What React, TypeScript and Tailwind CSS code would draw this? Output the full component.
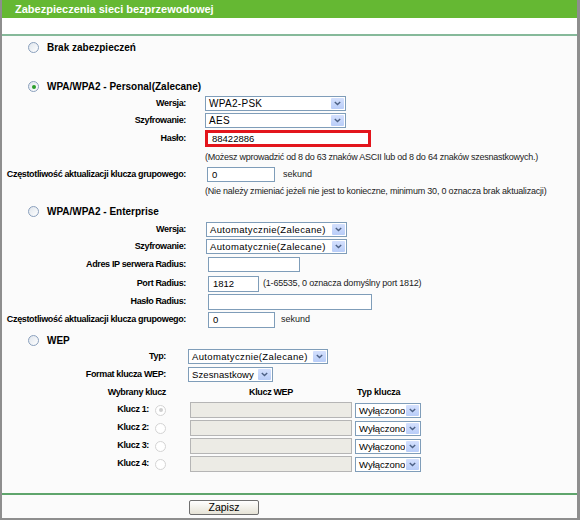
import React from "react";

const sans = "font-['Liberation_Sans',Arial,sans-serif]";

function Radio({ checked = false, disabled = false }: { checked?: boolean; disabled?: boolean }) {
    return (
        <span
            className={
                disabled
                    ? "inline-flex h-[11px] w-[11px] shrink-0 items-center justify-center rounded-full border border-[#d4d4d4] bg-white"
                    : "inline-flex h-[11px] w-[11px] shrink-0 items-center justify-center rounded-full border border-[#8aa0bd] bg-gradient-to-br from-[#dfe5ec] to-white"
            }
        >
            {checked && (
                <span
                    className={
                        disabled
                            ? "h-[4px] w-[4px] rounded-full bg-[#cfcfcf]"
                            : "h-[4px] w-[4px] rounded-full bg-[#2a9e2a]"
                    }
                />
            )}
        </span>
    );
}

function Select({ value, width, text = "text-[9.5px]" }: { value: string; width: string; text?: string }) {
    return (
        <div className={`flex h-[15px] items-stretch border border-[#7f9db9] bg-white ${width}`}>
            <span className={`flex-1 overflow-hidden whitespace-nowrap pl-[3px] leading-[13px] text-black ${text}`}>
                {value}
            </span>
            <span className="m-[1px] flex w-[13px] shrink-0 items-center justify-center rounded-[1px] bg-gradient-to-b from-[#d4e0fd] to-[#b9cdf8]">
                <svg width="7" height="5" viewBox="0 0 7 5">
                    <polyline points="0.8,1 3.5,3.6 6.2,1" fill="none" stroke="#4d6185" strokeWidth="1.4" />
                </svg>
            </span>
        </div>
    );
}

function Input({ value = "", width, disabled = false, h = "h-[15px]" }: { value?: string; width: string; disabled?: boolean; h?: string }) {
    return (
        <div
            className={
                disabled
                    ? `border border-[#b5b5b5] bg-[#ecebe5] ${width} ${h}`
                    : `border border-[#7f9db9] bg-white pl-[4px] text-[9.5px] leading-[14px] text-black ${width} ${h}`
            }
        >
            {value}
        </div>
    );
}

function Label({ children, width }: { children: React.ReactNode; width: string }) {
    return (
        <div className={`shrink-0 whitespace-nowrap text-right text-[9px] font-bold tracking-[-0.35px] text-black ${width}`}>
            {children}
        </div>
    );
}

function Heading({ title, checked = false, mt }: { title: string; checked?: boolean; mt: string }) {
    return (
        <div className={`flex h-[15px] items-center gap-[8px] pl-[26px] ${mt}`}>
            <Radio checked={checked} />
            <span className="text-[10px] font-bold text-black">{title}</span>
        </div>
    );
}

export default function App() {
    const keys = ["Klucz 1:", "Klucz 2:", "Klucz 3:", "Klucz 4:"];
    const auto = "text-[9.5px] tracking-[0.35px]";

    return (
        <div className={`flex h-[520px] w-[580px] flex-col border-b-2 border-l-2 border-r-[3px] border-[#8e8e8e] bg-[#fbfbfb] ${sans}`}>
            <div className="h-[18px] bg-[#65b833] pl-[13px] text-[11px] font-bold leading-[18px] text-white">
                Zabezpieczenia sieci bezprzewodowej
            </div>
            <div className="h-[16px] bg-white" />
            <div className="h-[2px] bg-[#86b99a]" />

            <Heading title="Brak zabezpieczeń" mt="mt-[4px]" />

            <Heading title="WPA/WPA2 - Personal(Zalecane)" checked mt="mt-[24px]" />
            <div className="mt-[2px] flex items-center">
                <Label width="w-[184px]">Wersja:</Label>
                <div className="ml-[19px]"><Select value="WPA2-PSK" width="w-[141px]" text="text-[10px] tracking-[0.3px]" /></div>
            </div>
            <div className="mt-[2px] flex items-center">
                <Label width="w-[184px]">Szyfrowanie:</Label>
                <div className="ml-[19px]"><Select value="AES" width="w-[141px]" text="text-[10px] tracking-[0.3px]" /></div>
            </div>
            <div className="mt-[2px] flex items-center">
                <Label width="w-[184px]">Hasło:</Label>
                <div className="ml-[19px] h-[17px] w-[166px] border-[3px] border-[#e3151c] bg-white pl-[4px] text-[9.5px] leading-[11px] text-black">
                    88422886
                </div>
            </div>
            <div className="mt-[3px] h-[14px] pl-[203px] text-[9px] leading-[14px] tracking-[-0.25px] text-[#222]">
                (Możesz wprowadzić od 8 do 63 znaków ASCII lub od 8 do 64 znaków szesnastkowych.)
            </div>
            <div className="mt-[3px] flex items-center">
                <Label width="w-[184px]">Częstotliwość aktualizacji klucza grupowego:</Label>
                <div className="ml-[21px]"><Input value="0" width="w-[68px]" /></div>
                <span className="ml-[8px] text-[9px] text-[#222]">sekund</span>
            </div>
            <div className="mt-[2px] h-[14px] pl-[203px] text-[9px] leading-[14px] tracking-[-0.2px] text-[#222]">
                (Nie należy zmieniać jeżeli nie jest to konieczne, minimum 30, 0 oznacza brak aktualizacji)
            </div>

            <Heading title="WPA/WPA2 - Enterprise" mt="mt-[6px]" />
            <div className="mt-[3px] flex items-center">
                <Label width="w-[184px]">Wersja:</Label>
                <div className="ml-[20px]"><Select value="Automatycznie(Zalecane)" width="w-[141px]" text={auto} /></div>
            </div>
            <div className="mt-[2px] flex items-center">
                <Label width="w-[184px]">Szyfrowanie:</Label>
                <div className="ml-[20px]"><Select value="Automatycznie(Zalecane)" width="w-[141px]" text={auto} /></div>
            </div>
            <div className="mt-[3px] flex items-center">
                <Label width="w-[184px]">Adres IP serwera Radius:</Label>
                <div className="ml-[22px]"><Input width="w-[92px]" /></div>
            </div>
            <div className="mt-[4px] flex items-center">
                <Label width="w-[184px]">Port Radius:</Label>
                <div className="ml-[22px]"><Input value="1812" width="w-[51px]" h="h-[16px]" /></div>
                <span className="ml-[4px] text-[9px] tracking-[-0.2px] text-[#222]">(1-65535, 0 oznacza domyślny port 1812)</span>
            </div>
            <div className="mt-[2px] flex items-center">
                <Label width="w-[184px]">Hasło Radius:</Label>
                <div className="ml-[22px]"><Input width="w-[164px]" h="h-[16px]" /></div>
            </div>
            <div className="mt-[2px] flex items-center">
                <Label width="w-[184px]">Częstotliwość aktualizacji klucza grupowego:</Label>
                <div className="ml-[22px]"><Input value="0" width="w-[67px]" h="h-[16px]" /></div>
                <span className="ml-[6px] text-[9px] text-[#222]">sekund</span>
            </div>

            <Heading title="WEP" mt="mt-[5px]" />
            <div className="mt-[1px] flex items-center">
                <Label width="w-[164px]">Typ:</Label>
                <div className="ml-[22px]"><Select value="Automatycznie(Zalecane)" width="w-[140px]" text={auto} /></div>
            </div>
            <div className="mt-[3px] flex items-center">
                <Label width="w-[164px]">Format klucza WEP:</Label>
                <div className="ml-[22px]"><Select value="Szesnastkowy" width="w-[85px]" text="text-[9.5px] tracking-[0.1px]" /></div>
            </div>
            <div className="mt-[4px] flex h-[14px] items-center">
                <Label width="w-[164px]">Wybrany klucz</Label>
                <div className="ml-[24px] w-[162px] text-center text-[9px] font-bold tracking-[-0.35px] text-black">Klucz WEP</div>
                <div className="ml-[5px] text-[9px] font-bold tracking-[-0.2px] text-black">Typ klucza</div>
            </div>
            {keys.map((k, i) => (
                <div key={k} className="mt-[2px] flex h-[16px] items-center">
                    <div className="flex w-[164px] shrink-0 items-center justify-end gap-[6px]">
                        <span className="text-[9px] font-bold tracking-[-0.35px] text-black">{k}</span>
                        <Radio checked={i === 0} disabled />
                    </div>
                    <div className="ml-[24px]"><Input disabled width="w-[162px]" h="h-[16px]" /></div>
                    <div className="ml-[3px]"><Select value="Wyłączono" width="w-[66px]" text="text-[9.5px]" /></div>
                </div>
            ))}

            <div className="mt-[21px] h-[2px] bg-[#5fa56c]" />
            <div className="mt-[5px] pl-[187px]">
                <div className="flex h-[15px] w-[70px] items-center justify-center rounded-[2px] border border-[#6f6f6f] bg-gradient-to-b from-white to-[#e6e3d6] text-[10.5px] text-black">
                    Zapisz
                </div>
            </div>
        </div>
    );
}
